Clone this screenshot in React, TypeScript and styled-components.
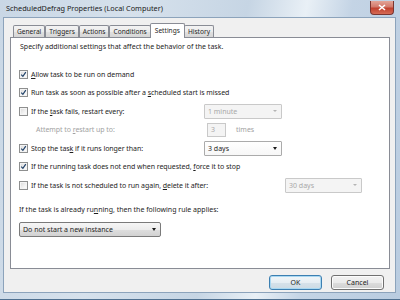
import { FC, ReactNode } from "react";
import styled, { createGlobalStyle } from "styled-components";

const GlobalStyle = createGlobalStyle`
  html, body {
    margin: 0;
    padding: 0;
    width: 400px;
    height: 300px;
    overflow: hidden;
  }
  body {
    font-family: "Noto Sans", "Open Sans", sans-serif;
    font-size: 7px;
    color: #1e1e1e;
  }
`;

// Window chrome
const Window = styled.div`
  width: 400px;
  height: 300px;
  box-sizing: border-box;
  display: flex;
  flex-direction: column;
  padding: 0 4px 6px 3px;
  background: linear-gradient(
    100deg,
    #c9d7e5 0%,
    #d6e1ec 30%,
    #c6d5e4 55%,
    #e9f0f6 68%,
    #c4d4e5 78%,
    #b9cce0 100%
  );
  border-bottom: 1px solid #4f7090;
`;

const TitleBar = styled.div`
  height: 17px;
  flex: none;
  display: flex;
  align-items: flex-start;
  justify-content: space-between;
  padding-left: 3px;
`;

const TitleText = styled.span`
  font-size: 7.3px;
  line-height: 16px;
  color: #202020;
`;

const CloseButton = styled.div`
  width: 24px;
  height: 14px;
  margin: 1px 2px 0 0;
  box-sizing: border-box;
  border: 1px solid #7a3530;
  border-top: none;
  border-radius: 0 0 4px 4px;
  background: linear-gradient(180deg, #e3a497 0%, #d27a6c 45%, #c0402e 55%, #d66b55 100%);
  display: flex;
  align-items: center;
  justify-content: center;
`;

const Client = styled.div`
  flex: 1;
  display: flex;
  flex-direction: column;
  background: #f0f0f0;
  border: 1px solid #8ca3bb;
  padding: 5px 5px 0 6px;
  min-height: 0;
`;

// Tabs
const TabStrip = styled.div`
  height: 14px;
  flex: none;
  display: flex;
  align-items: flex-start;
  padding-left: 3px;
  position: relative;
  z-index: 1;
`;

const Tab = styled.div<{ $active?: boolean }>`
  box-sizing: border-box;
  height: ${(p) => (p.$active ? "15px" : "12px")};
  margin-top: ${(p) => (p.$active ? "0" : "2px")};
  margin-left: ${(p) => (p.$active ? "-1px" : "0")};
  margin-right: ${(p) => (p.$active ? "-1px" : "0")};
  padding: 0 ${(p) => (p.$active ? "4px" : "3px")};
  border: 1px solid #898c95;
  border-bottom: none;
  border-radius: 2px 2px 0 0;
  background: ${(p) =>
    p.$active ? "#ffffff" : "linear-gradient(180deg, #f3f3f3 0%, #ebebeb 50%, #e1e1e1 51%, #d6d6d6 100%)"};
  font-size: 6.6px;
  line-height: ${(p) => (p.$active ? "13px" : "11px")};
  white-space: nowrap;
`;

const Panel = styled.div`
  flex: 1;
  background: #ffffff;
  border: 1px solid #898c95;
  padding: 2px 8px 0 8px;
  display: flex;
  flex-direction: column;
`;

const Description = styled.div`
  line-height: 14px;
  padding-left: 1px;
  white-space: nowrap;
`;

const Rows = styled.div`
  display: flex;
  flex-direction: column;
  gap: 3.5px;
  margin-top: 12.5px;
`;

const Row = styled.div<{ $indent?: number }>`
  height: 15px;
  display: flex;
  align-items: center;
  padding-left: ${(p) => p.$indent ?? 0}px;
`;

const Box = styled.div`
  width: 9px;
  height: 9px;
  flex: none;
  box-sizing: border-box;
  border: 1px solid #8e8f8f;
  background: linear-gradient(135deg, #d8d8d8 0%, #f2f2f2 60%, #ffffff 100%);
  box-shadow: inset 0 0 0 1px #f4f4f4;
  display: flex;
  align-items: center;
  justify-content: center;
`;

const Label = styled.span<{ $width?: number; $muted?: boolean }>`
  margin-left: 3px;
  white-space: nowrap;
  width: ${(p) => (p.$width ? `${p.$width}px` : "auto")};
  flex: none;
  letter-spacing: -0.05px;
  color: ${(p) => (p.$muted ? "#a2a2a2" : "#1e1e1e")};
`;

const Combo = styled.div<{ $width: number; $disabled?: boolean; $button?: boolean }>`
  width: ${(p) => p.$width}px;
  height: 15px;
  box-sizing: border-box;
  flex: none;
  display: flex;
  align-items: center;
  justify-content: space-between;
  padding: 0 4px 0 3px;
  border: 1px solid ${(p) => (p.$disabled ? "#c9c9c9" : p.$button ? "#7a7a7a" : "#ababab")};
  border-radius: ${(p) => (p.$button ? "2px" : "1px")};
  background: ${(p) =>
    p.$disabled
      ? "#f4f4f4"
      : p.$button
      ? "linear-gradient(180deg, #f6f6f6 0%, #ececec 50%, #dedede 51%, #d2d2d2 100%)"
      : "linear-gradient(180deg, #ffffff 0%, #f7f7f7 100%)"};
  color: ${(p) => (p.$disabled ? "#a8a8a8" : "#1e1e1e")};
  white-space: nowrap;
`;

const Arrow = styled.span<{ $disabled?: boolean }>`
  width: 0;
  height: 0;
  border-left: ${(p) => (p.$disabled ? "2px" : "2.5px")} solid transparent;
  border-right: ${(p) => (p.$disabled ? "2px" : "2.5px")} solid transparent;
  border-top: ${(p) => (p.$disabled ? "2px" : "3px")} solid ${(p) => (p.$disabled ? "#b4b4b4" : "#1a1a1a")};
`;

const SpinInput = styled.div`
  width: 19px;
  height: 14px;
  box-sizing: border-box;
  border: 1px solid #c9c9c9;
  background: #f4f4f4;
  color: #a8a8a8;
  padding-left: 3px;
  line-height: 12px;
  flex: none;
`;

const Suffix = styled.span`
  margin-left: 10px;
  color: #a2a2a2;
`;

const Note = styled.div`
  line-height: 14px;
  margin-top: 10px;
  white-space: nowrap;
`;

const RuleSelect = styled.div`
  margin-top: 5.5px;
`;

const Footer = styled.div`
  height: 23px;
  flex: none;
  display: flex;
  justify-content: flex-end;
  align-items: flex-start;
  padding: 6px 6px 0 0;
  box-sizing: border-box;
  gap: 9px;
`;

const Button = styled.div<{ $default?: boolean }>`
  width: 53px;
  height: 15px;
  box-sizing: border-box;
  border: 1px solid ${(p) => (p.$default ? "#3c7fb1" : "#707070")};
  border-radius: 3px;
  background: ${(p) =>
    p.$default
      ? "linear-gradient(180deg, #f1f6f9 0%, #e6eef3 50%, #d6e2ea 51%, #cddbe4 100%)"
      : "linear-gradient(180deg, #f2f2f2 0%, #ebebeb 50%, #dddddd 51%, #cfcfcf 100%)"};
  box-shadow: ${(p) => (p.$default ? "inset 0 0 0 1px #a9d8f2" : "inset 0 0 0 1px #fcfcfc")};
  display: flex;
  align-items: center;
  justify-content: center;
  line-height: 13px;
`;

const Check: FC<{ checked?: boolean }> = ({ checked }) => (
  <Box>
    {checked && (
      <svg width="7" height="7" viewBox="0 0 7 7">
        <path d="M1.2 3.6 L2.9 5.4 L5.8 1.2" fill="none" stroke="#22436a" strokeWidth="1.2" />
      </svg>
    )}
  </Box>
);

const CheckRow: FC<{ checked?: boolean; width?: number; children: ReactNode; control?: ReactNode }> = ({
  checked,
  width,
  children,
  control,
}) => (
  <Row>
    <Check checked={checked} />
    <Label $width={width}>{children}</Label>
    {control}
  </Row>
);

const tabs = ["General", "Triggers", "Actions", "Conditions", "Settings", "History"];

const App: FC = () => {
  return (
    <>
      <GlobalStyle />
      <Window>
        <TitleBar>
          <TitleText>ScheduledDefrag Properties (Local Computer)</TitleText>
          <CloseButton>
            <svg width="8" height="7" viewBox="0 0 8 7">
              <path d="M1 1 L7 6 M7 1 L1 6" stroke="#ffffff" strokeWidth="1.6" />
            </svg>
          </CloseButton>
        </TitleBar>

        <Client>
          <TabStrip>
            {tabs.map((t) => (
              <Tab key={t} $active={t === "Settings"}>
                {t}
              </Tab>
            ))}
          </TabStrip>

          <Panel>
            <Description>Specify additional settings that affect the behavior of the task.</Description>

            <Rows>
              <CheckRow checked>
                <u>A</u>llow task to be run on demand
              </CheckRow>
              <CheckRow checked>
                Run task as soon as possible after a <u>s</u>cheduled start is missed
              </CheckRow>
              <CheckRow
                width={173}
                control={
                  <Combo $width={78} $disabled>
                    1 minute
                    <Arrow $disabled />
                  </Combo>
                }
              >
                If the <u>t</u>ask fails, restart every:
              </CheckRow>
              <Row $indent={14}>
                <Label $width={171} $muted>
                  Attempt to <u>r</u>estart up to:
                </Label>
                <SpinInput>3</SpinInput>
                <Suffix>times</Suffix>
              </Row>
              <CheckRow
                checked
                width={173}
                control={
                  <Combo $width={78}>
                    3 days
                    <Arrow />
                  </Combo>
                }
              >
                Stop the tas<u>k</u> if it runs longer than:
              </CheckRow>
              <CheckRow checked>
                If the running task does not end when requested, <u>f</u>orce it to stop
              </CheckRow>
              <CheckRow
                width={254}
                control={
                  <Combo $width={77} $disabled>
                    30 days
                    <Arrow $disabled />
                  </Combo>
                }
              >
                If the task is not scheduled to run again, <u>d</u>elete it after:
              </CheckRow>
            </Rows>

            <Note>
              If the task is already ru<u>n</u>ning, then the following rule applies:
            </Note>
            <RuleSelect>
              <Combo $width={142} $button>
                Do not start a new instance
                <Arrow />
              </Combo>
            </RuleSelect>
          </Panel>

          <Footer>
            <Button $default>OK</Button>
            <Button>Cancel</Button>
          </Footer>
        </Client>
      </Window>
    </>
  );
};

export default App;
